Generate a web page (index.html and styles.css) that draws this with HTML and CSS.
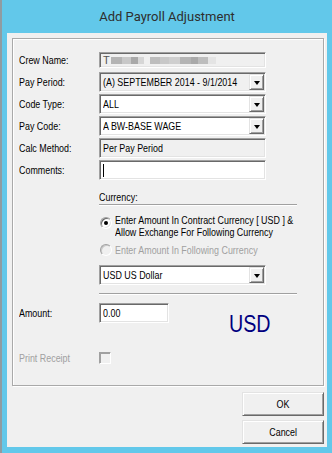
FILE: index.html
```html
<!DOCTYPE html>
<html>
<head>
<meta charset="utf-8">
<link rel="stylesheet" href="styles.css">
</head>
<body>
<div class="screen">
  <div class="strip"></div>
  <div class="frame">
    <div class="titlebar">Add Payroll Adjustment</div>
    <div class="client">
      <div class="group">
        <div class="row first">
          <span class="lbl tx">Crew Name:</span>
          <div class="field ro crew"><span class="t">T</span><span class="blur b1"></span><span class="blur b2"></span><span class="blur b3"></span><span class="blur b4"></span><span class="gap"></span><span class="blur b5"></span><span class="blur b2"></span><span class="blur b6"></span><span class="blur b1"></span><span class="blur b3"></span><span class="blur b5"></span><span class="blur b7"></span></div>
        </div>
        <div class="row">
          <span class="lbl tx">Pay Period:</span>
          <div class="field combo ro"><span class="val"><span class="tx">(A) SEPTEMBER 2014 - 9/1/2014</span></span><span class="dd"><i class="arrow"></i></span></div>
        </div>
        <div class="row">
          <span class="lbl tx">Code Type:</span>
          <div class="field combo"><span class="val"><span class="tx">ALL</span></span><span class="dd"><i class="arrow"></i></span></div>
        </div>
        <div class="row">
          <span class="lbl tx">Pay Code:</span>
          <div class="field combo"><span class="val"><span class="tx">A BW-BASE WAGE</span></span><span class="dd"><i class="arrow"></i></span></div>
        </div>
        <div class="row">
          <span class="lbl tx">Calc Method:</span>
          <div class="field ro"><span class="val"><span class="tx">Per Pay Period</span></span></div>
        </div>
        <div class="row">
          <span class="lbl tx">Comments:</span>
          <div class="field"><span class="caret"></span></div>
        </div>

        <div class="currency">
          <div class="cur-head"><span class="tx">Currency:</span></div>
          <div class="rule"></div>
          <div class="radio-row">
            <span class="radio on"><i class="dot"></i></span>
            <span class="rtext tx">Enter Amount In Contract Currency [ USD ] &amp;<br>Allow Exchange For Following Currency</span>
          </div>
          <div class="radio-row dis">
            <span class="radio"></span>
            <span class="rtext tx">Enter Amount In Following Currency</span>
          </div>
          <div class="field combo cur-combo"><span class="val"><span class="tx">USD US Dollar</span></span><span class="dd"><i class="arrow"></i></span></div>
          <div class="rule rule2"></div>
        </div>

        <div class="amount-row">
          <span class="lbl tx">Amount:</span>
          <div class="field amt"><span class="val"><span class="tx">0.00</span></span></div>
          <span class="usd">USD</span>
        </div>

        <div class="print-row">
          <span class="lbl tx dis-lbl">Print Receipt</span>
          <span class="check"></span>
        </div>
      </div>
      <div class="buttons">
        <div class="btn"><span class="tx">OK</span></div>
        <div class="btn"><span class="tx">Cancel</span></div>
      </div>
    </div>
  </div>
</div>
</body>
</html>
```
FILE: styles.css
```css
html, body {
  margin: 0;
  padding: 0;
}
body {
  width: 332px;
  height: 453px;
  overflow: hidden;
  font-family: "Liberation Sans", Arial, sans-serif;
  font-size: 11px;
  color: #000;
}
.tx {
  display: inline-block;
  white-space: nowrap;
  transform: scaleX(0.81);
  transform-origin: 0 50%;
}
.screen {
  display: flex;
  width: 332px;
  height: 453px;
}
.strip {
  width: 2px;
  background: #8f9ca2;
  flex: none;
}
.frame {
  flex: 1;
  background: #62c8ea;
  padding: 0 5px 6px 5px;
  display: flex;
  flex-direction: column;
}
.titlebar {
  height: 33px;
  flex: none;
  display: flex;
  align-items: center;
  justify-content: center;
  font-family: Roboto, "Liberation Sans", sans-serif;
  font-size: 13px;
  color: #2e2e2e;
  padding-bottom: 1px;
  box-sizing: border-box;
}
.client {
  flex: 1;
  background: #f0f0f0;
  padding: 5px 3px 0 5px;
  display: flex;
  flex-direction: column;
}
.group {
  height: 348px;
  box-sizing: border-box;
  border: 1px solid #a9a9a9;
  box-shadow: inset 1px 1px #fff, 1px 1px #fff;
  padding: 13px 0 0 6px;
}
.row {
  display: grid;
  grid-template-columns: 80px 167px;
  align-items: center;
  height: 20px;
  margin-top: 2px;
}
.row.first {
  height: 16px;
  margin-top: 0;
  margin-bottom: 4px;
}
.field {
  height: 20px;
  box-sizing: border-box;
  background: #fff;
  border: 1px solid;
  border-color: #a0a0a0 #fff #fff #a0a0a0;
  box-shadow: inset 1px 1px #696969, inset -1px -1px #e3e3e3;
  display: flex;
  align-items: center;
  padding-left: 3px;
  white-space: nowrap;
  overflow: hidden;
}
.field.ro {
  background: #f0f0f0;
}
.row.first .field {
  height: 16px;
}
.val {
  flex: 1;
  min-width: 0;
}
.combo {
  padding-right: 1px;
}
.dd {
  width: 15px;
  height: 16px;
  box-sizing: border-box;
  flex: none;
  background: #f0f0f0;
  border: 1px solid;
  border-color: #e3e3e3 #696969 #696969 #e3e3e3;
  box-shadow: inset 1px 1px #fff, inset -1px -1px #a0a0a0;
  display: flex;
  align-items: center;
  justify-content: center;
}
.arrow {
  width: 0;
  height: 0;
  border-top: 4px solid #000;
  border-left: 3.5px solid transparent;
  border-right: 3.5px solid transparent;
  margin-top: 1px;
}
.crew .t {
  color: #555;
  margin-right: 1px;
}
.blur {
  display: inline-block;
  height: 7px;
  flex: none;
}
.b1 { background: #b4b4b4; width: 11px; }
.b2 { background: #c8c8c8; width: 9px; }
.b3 { background: #a9a9a9; width: 7px; }
.b4 { background: #d6d6d6; width: 6px; }
.b5 { background: #bdbdbd; width: 10px; }
.b6 { background: #cfcfcf; width: 11px; }
.b7 { background: #e4e4e4; width: 8px; }
.gap { width: 6px; flex: none; }
.caret {
  width: 1px;
  height: 13px;
  background: #000;
}

.currency {
  margin-left: 80px;
  width: 198px;
  padding-top: 11px;
}
.cur-head {
  height: 12px;
  line-height: 12px;
}
.rule {
  height: 1px;
  background: #a0a0a0;
  border-bottom: 1px solid #fff;
  margin-top: 1px;
}
.radio-row {
  display: flex;
  align-items: flex-start;
  margin-top: 8px;
  line-height: 12px;
}
.radio-row.dis {
  margin-top: 6px;
  color: #a0a0a0;
}
.radio {
  width: 12px;
  height: 12px;
  box-sizing: border-box;
  border-radius: 50%;
  border: 1px solid;
  border-color: #a0a0a0 #fff #fff #a0a0a0;
  background: #fff;
  box-shadow: inset 1px 1px #696969, inset -1px -1px #e3e3e3;
  margin: 3px 3px 0 1px;
  flex: none;
  display: flex;
  align-items: center;
  justify-content: center;
}
.radio-row.dis .radio {
  background: #f0f0f0;
  box-shadow: inset 1px 1px #c8c8c8;
  margin-top: 0;
}
.dot {
  width: 4px;
  height: 4px;
  border-radius: 50%;
  background: #000;
}
.cur-combo {
  width: 167px;
  margin-top: 9px;
}
.rule2 {
  margin-top: 8px;
}
.amount-row {
  display: grid;
  grid-template-columns: 80px 70px auto;
  grid-template-rows: 20px;
  align-items: center;
  margin-top: 8px;
  height: 20px;
}
.amt {
  width: 70px;
}
.usd {
  display: inline-block;
  align-self: start;
  font-size: 24px;
  line-height: 28px;
  color: #000080;
  margin-left: 60px;
  margin-top: 7px;
  transform: scaleX(0.82);
  transform-origin: 0 50%;
}
.print-row {
  display: grid;
  grid-template-columns: 80px 13px;
  align-items: center;
  margin-top: 28px;
  height: 13px;
}
.dis-lbl {
  color: #a0a0a0;
}
.check {
  width: 12px;
  height: 12px;
  box-sizing: border-box;
  border: 1px solid;
  border-color: #a0a0a0 #fff #fff #a0a0a0;
  box-shadow: inset 1px 1px #a0a0a0;
  background: #f0f0f0;
}
.buttons {
  display: flex;
  flex-direction: column;
  align-items: flex-end;
  gap: 4px;
  margin-top: 6px;
}
.btn {
  width: 82px;
  height: 24px;
  box-sizing: border-box;
  border: 1px solid;
  border-color: #e3e3e3 #696969 #696969 #e3e3e3;
  box-shadow: inset 1px 1px #fff, inset -1px -1px #a0a0a0;
  background: #f0f0f0;
  display: flex;
  align-items: center;
  justify-content: center;
}
.btn .tx {
  transform-origin: 50% 50%;
}
```
